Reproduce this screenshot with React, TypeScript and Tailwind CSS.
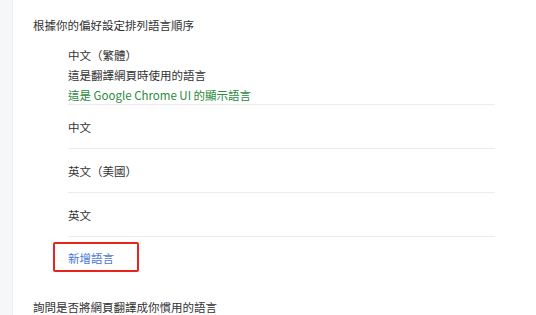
import React from 'react';

const rows = ['中文', '英文（美國）', '英文'];

export default function App() {
  return (
    <div
      className="flex w-[536px] h-[315px] overflow-hidden bg-white text-[11.5px] text-[#333]"
      style={{ fontFamily: '"Noto Sans CJK TC", "Noto Sans", sans-serif' }}
    >
      <div className="w-[13px] shrink-0 bg-[#f6f7f8] border-r border-[#eceef0]" />
      <div className="flex-1 pl-[20px] pt-[17px]">
        <div className="leading-[16px]">根據你的偏好設定排列語言順序</div>

        <div className="ml-[35px] mt-[12px] w-[427px]">
          <div className="border-b border-[#ebebeb]">
            <div className="leading-[20px]">中文（繁體）</div>
            <div className="leading-[20px]">這是翻譯網頁時使用的語言</div>
            <div className="mt-[2px] leading-[17px] text-[#2b8a3e]">
              這是 Google Chrome UI 的顯示語言
            </div>
          </div>
          {rows.map((r) => (
            <div key={r} className="h-[44px] flex items-center border-b border-[#ebebeb]">
              <span className="mt-[2px]">{r}</span>
            </div>
          ))}
        </div>

        <div className="ml-[20px] mt-[5px] w-[86px] h-[30px] flex items-center pl-[13px] border-2 border-[#e8241c] rounded-[2px]">
          <span className="mt-[3px] text-[#4a76d9]">新增語言</span>
        </div>

        <div className="mt-[27px] leading-[16px]">詢問是否將網頁翻譯成你慣用的語言</div>
      </div>
    </div>
  );
}
